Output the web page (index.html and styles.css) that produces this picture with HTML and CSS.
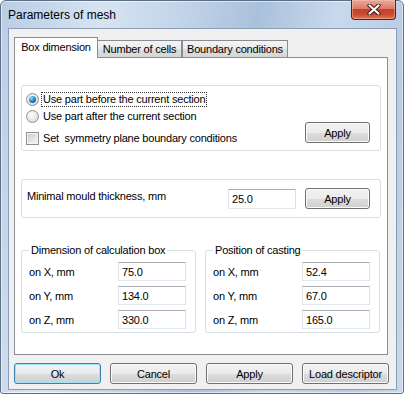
FILE: index.html
```html
<!DOCTYPE html>
<html lang="en">
<head>
    <meta charset="UTF-8">
    <title>Parameters of mesh</title>
    <link rel="stylesheet" href="styles.css">
</head>
<body>
    <div class="window">
        <div class="titlebar">
            <span class="title">Parameters of mesh</span>
            <div class="close">
                <svg width="14" height="11" viewBox="0 0 14 11">
                    <path d="M2.5 1.5 L11.5 9.5 M11.5 1.5 L2.5 9.5" stroke="#4a1610" stroke-width="4.2" stroke-linecap="round"/>
                    <path d="M2.5 1.5 L11.5 9.5 M11.5 1.5 L2.5 9.5" stroke="#ffffff" stroke-width="2.2" stroke-linecap="round"/>
                </svg>
            </div>
        </div>

        <div class="client">
            <div class="tabs">
                <div class="tab active">Box dimension</div>
                <div class="tab">Number of cells</div>
                <div class="tab tab-wide">Boundary conditions</div>
            </div>

            <div class="panel">
                <div class="group group-mode">
                    <div class="options">
                        <div class="opt"><span class="radio checked"></span><span class="opt-text focused">Use part before the current section</span></div>
                        <div class="opt"><span class="radio"></span><span class="opt-text">Use part after the current section</span></div>
                        <div class="opt opt-check"><span class="check"></span><span class="opt-text">Set&nbsp; symmetry plane boundary conditions</span></div>
                    </div>
                    <button class="btn btn-group">Apply</button>
                </div>

                <div class="group group-thick">
                    <span class="thick-label">Minimal mould thickness, mm</span>
                    <input class="field" type="text" value="25.0">
                    <button class="btn btn-group">Apply</button>
                </div>

                <div class="pair">
                    <fieldset class="box">
                        <legend>Dimension of calculation box</legend>
                        <div class="row"><span>on X, mm</span><input class="field" type="text" value="75.0"></div>
                        <div class="row"><span>on Y, mm</span><input class="field" type="text" value="134.0"></div>
                        <div class="row"><span>on Z, mm</span><input class="field" type="text" value="330.0"></div>
                    </fieldset>
                    <fieldset class="box">
                        <legend>Position of casting</legend>
                        <div class="row"><span>on X, mm</span><input class="field" type="text" value="52.4"></div>
                        <div class="row"><span>on Y, mm</span><input class="field" type="text" value="67.0"></div>
                        <div class="row"><span>on Z, mm</span><input class="field" type="text" value="165.0"></div>
                    </fieldset>
                </div>
            </div>

            <div class="actions">
                <button class="btn btn-default">Ok</button>
                <button class="btn">Cancel</button>
                <button class="btn">Apply</button>
                <button class="btn">Load descriptor</button>
            </div>
        </div>
    </div>
</body>
</html>
```

FILE: styles.css
```css
body {
    margin: 0;
    background-color: #ffffff;
    font-family: "Liberation Sans", Arial, sans-serif;
    font-size: 11px;
    letter-spacing: -0.2px;
    color: #000000;
}

.window {
    width: 404px;
    height: 394px;
    box-sizing: border-box;
    border: 1px solid #5d6f84;
    border-radius: 6px 6px 3px 3px;
    background: linear-gradient(100deg, #b9cde5 0%, #d6e3f1 22%, #c3d5ea 38%, #aac1dc 55%, #c8d9ec 72%, #b7cbe4 88%, #c9d9ec 100%);
    box-shadow: inset 0 0 0 1px rgba(255, 255, 255, 0.55);
    display: flex;
    flex-direction: column;
}

.titlebar {
    height: 27px;
    display: flex;
    align-items: flex-start;
    padding-left: 7px;
    padding-right: 7px;
}

.title {
    font-size: 12px;
    line-height: 14px;
    letter-spacing: 0;
    margin-top: 7px;
    color: #000000;
}

.close {
    margin-left: auto;
    margin-top: -1px;
    width: 45px;
    height: 20px;
    box-sizing: border-box;
    border: 1px solid #5b1d15;
    border-top: none;
    border-radius: 0 0 4px 4px;
    background: linear-gradient(#e9a99c 0%, #dc7b69 45%, #c6402a 50%, #c94a30 75%, #e0794f 100%);
    box-shadow: inset 0 0 0 1px rgba(255, 200, 190, 0.45);
    display: flex;
    align-items: center;
    justify-content: center;
}

.client {
    margin-left: 7px;
    width: 389px;
    height: 362px;
    box-sizing: border-box;
    border: 1px solid #8a9db4;
    background-color: #f0f0f0;
    padding: 8px 0 0 5px;
}

.tabs {
    display: flex;
    align-items: flex-end;
    height: 20px;
    position: relative;
    z-index: 1;
}

.tab {
    height: 17px;
    box-sizing: border-box;
    width: 84px;
    border: 1px solid #898c95;
    border-bottom: none;
    background: linear-gradient(#f4f4f4 0%, #ebebeb 50%, #dfdfdf 51%, #d6d6d6 100%);
    text-align: center;
    line-height: 17px;
}

.tab + .tab {
    border-left: none;
}

.tab-wide {
    width: 106px;
    border-left: 1px solid #898c95 !important;
}

.tab.active {
    height: 21px;
    margin-bottom: -1px;
    background: #ffffff;
    line-height: 19px;
}

.panel {
    width: 374px;
    height: 298px;
    box-sizing: border-box;
    border: 1px solid #898c95;
    background-color: #ffffff;
    padding: 27px 7px 0 6px;
}

.group {
    box-sizing: border-box;
    border: 1px solid #d5dfe5;
    border-radius: 3px;
    width: 360px;
}

.group-mode {
    height: 66px;
    display: flex;
    justify-content: space-between;
    padding: 5px 0 0 4px;
}

.options {
    display: flex;
    flex-direction: column;
}

.opt {
    height: 17px;
    display: flex;
    align-items: center;
}

.opt-check {
    margin-top: 5px;
}

.opt-text {
    border: 1px dotted transparent;
    padding: 0 1px;
    line-height: 13px;
    margin-left: 2px;
}

.opt-text.focused {
    border-color: #333333;
}

.radio {
    width: 13px;
    height: 13px;
    box-sizing: border-box;
    border-radius: 50%;
    border: 1px solid #8f9090;
    background: radial-gradient(circle at 40% 35%, #ffffff 0%, #eaeaea 45%, #cfd1d3 100%);
    display: flex;
    align-items: center;
    justify-content: center;
}

.radio.checked::after {
    content: "";
    width: 7px;
    height: 7px;
    border-radius: 50%;
    background: radial-gradient(circle at 35% 30%, #9be0ff 0%, #2a8ad4 45%, #0c4a86 100%);
}

.check {
    width: 13px;
    height: 13px;
    box-sizing: border-box;
    border: 1px solid #8f8f8f;
    background: linear-gradient(135deg, #c5c8cd 0%, #e3e5e8 55%, #f6f6f6 100%);
    box-shadow: inset 0 0 0 1px #f4f4f4;
}

.btn {
    font-family: "Liberation Sans", Arial, sans-serif;
    font-size: 11px;
    letter-spacing: -0.2px;
    color: #000000;
    height: 21px;
    box-sizing: border-box;
    border: 1px solid #707070;
    border-radius: 3px;
    background: linear-gradient(#f2f2f2 0%, #ebebeb 50%, #dddddd 51%, #cfcfcf 100%);
    box-shadow: inset 0 0 0 1px #fbfbfb;
    padding: 0;
}

.btn-group {
    width: 65px;
    align-self: flex-end;
    margin: 0 10px 7px 0;
}

.group-thick {
    margin-top: 28px;
    height: 39px;
    display: flex;
    align-items: center;
    padding-left: 5px;
}

.thick-label {
    flex: 1;
    margin-bottom: 5px;
}

.group-thick .field {
    margin-right: 9px;
}

.group-thick .btn-group {
    align-self: center;
    margin: 0 10px 0 0;
}

.field {
    width: 68px;
    height: 20px;
    box-sizing: border-box;
    border: 1px solid;
    border-color: #abadb3 #dbdfe6 #e3e9ef #e2e3ea;
    padding: 1px 3px 0;
    font-family: "Liberation Sans", Arial, sans-serif;
    font-size: 11px;
    letter-spacing: -0.2px;
    color: #000000;
    outline: none;
}

.pair {
    display: flex;
    gap: 9px;
    margin-top: 26px;
}

.box {
    width: 176px;
    box-sizing: border-box;
    margin: 0;
    border: 1px solid #d5dfe5;
    border-radius: 3px;
    padding: 5px 9px 3px 7px;
}

.box legend {
    padding: 0 2px;
    margin-left: 0;
    line-height: 13px;
}

.row {
    display: flex;
    align-items: center;
    justify-content: space-between;
}

.row + .row {
    margin-top: 5px;
}

.row .field {
    height: 19px;
}

.actions {
    display: flex;
    justify-content: space-between;
    width: 375px;
    margin-top: 8px;
}

.actions .btn {
    width: 87px;
}

.btn-default {
    border-color: #3c7fb1;
    box-shadow: inset 0 0 0 1px #9fe3fb;
}
```
